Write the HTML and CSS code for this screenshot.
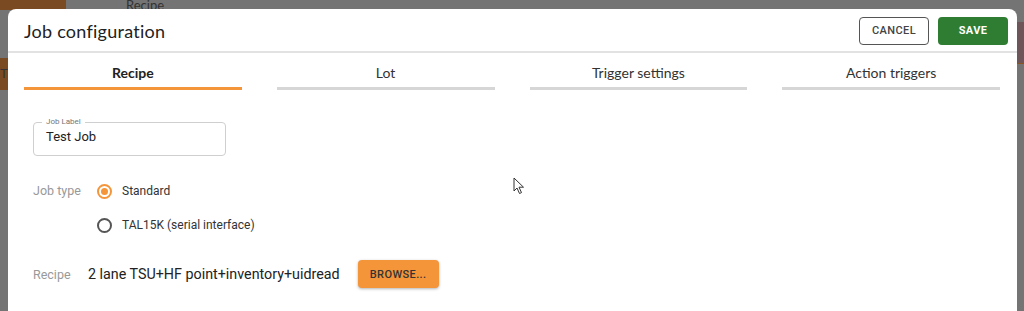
FILE: index.html
```html
<!DOCTYPE html>
<html lang="en">
<head>
    <meta charset="UTF-8">
    <meta name="viewport" content="width=device-width, initial-scale=1.0">
    <title>Job configuration</title>
    <link rel="stylesheet" href="styles.css">
</head>
<body>
    <div class="backdrop">
        <div class="page-bits">
            <div class="bit bit-top"></div>
            <div class="bit-tab">Recipe</div>
            <div class="bit bit-left">T</div>
            <div class="bit bit-right"></div>
        </div>
        <div class="dialog">
            <div class="dialog-header">
                <h1>Job configuration</h1>
                <div class="actions">
                    <button class="btn btn-cancel">CANCEL</button>
                    <button class="btn btn-save">SAVE</button>
                </div>
            </div>
            <div class="tabs">
                <div class="tab active">Recipe</div>
                <div class="tab">Lot</div>
                <div class="tab">Trigger settings</div>
                <div class="tab">Action triggers</div>
            </div>
            <div class="dialog-body">
                <fieldset class="field">
                    <legend>Job Label</legend>
                    <span class="field-value">Test Job</span>
                </fieldset>
                <div class="row radio-row">
                    <span class="row-label">Job type</span>
                    <div class="radios">
                        <label class="radio checked"><span class="dot"></span>Standard</label>
                        <label class="radio"><span class="dot"></span>TAL15K (serial interface)</label>
                    </div>
                </div>
                <div class="row recipe-row">
                    <span class="row-label">Recipe</span>
                    <span class="recipe-name">2 lane TSU+HF point+inventory+uidread</span>
                    <button class="btn btn-browse">BROWSE...</button>
                </div>
            </div>
            <svg class="cursor" width="12" height="18" viewBox="0 0 12 18">
                <path d="M1 1 L1 14 L4 11 L6.5 16.5 L8.5 15.6 L6 10.2 L10.5 10.2 Z" fill="#fff" stroke="#333" stroke-width="1" stroke-linejoin="round"/>
            </svg>
        </div>
    </div>
</body>
</html>
```

FILE: styles.css
```css
* {
    box-sizing: border-box;
}

body {
    margin: 0;
    font-family: Roboto, "Liberation Sans", sans-serif;
}

.backdrop {
    position: relative;
    width: 1024px;
    height: 311px;
    background-color: #747474;
    overflow: hidden;
    padding: 9px 7px 0 8px;
}

/* greyed-out page behind the dialog */
.bit {
    position: absolute;
    background-color: #7a4a22;
}

.bit-top {
    left: 0;
    top: 0;
    width: 66px;
    height: 10px;
}

.bit-tab {
    position: absolute;
    left: 126px;
    top: -3px;
    font-family: Lato, sans-serif;
    font-size: 13px;
    color: #333;
}

.bit-left {
    left: 0;
    top: 58px;
    width: 8px;
    height: 32px;
    color: #333;
    font-size: 13px;
    line-height: 32px;
    overflow: hidden;
}

.bit-right {
    right: 0;
    top: 22px;
    width: 8px;
    height: 42px;
    background-color: #6e5559;
    border-bottom: 1px solid #8a5520;
}

.dialog {
    position: relative;
    height: 100%;
    background-color: #fff;
    border-radius: 8px 8px 0 0;
}

.dialog-header {
    display: flex;
    align-items: center;
    justify-content: space-between;
    height: 44px;
    padding: 1px 9px 0 16px;
    border-bottom: 2px solid #e2e2e2;
}

.dialog-header h1 {
    margin: 0;
    font-family: Lato, sans-serif;
    font-size: 18px;
    font-weight: 400;
    color: #222;
    letter-spacing: 0.25px;
}

.actions {
    display: flex;
    gap: 9px;
}

.btn {
    font-family: Roboto, sans-serif;
    font-size: 11px;
    font-weight: 500;
    letter-spacing: 0.4px;
    height: 28px;
    border-radius: 4px;
    cursor: pointer;
}

.btn-cancel {
    width: 70px;
    background-color: #fff;
    border: 1px solid #555;
    color: #444;
}

.btn-save {
    width: 70px;
    background-color: #2e7d32;
    border: none;
    color: #fff;
    font-weight: 700;
}

.tabs {
    display: flex;
    gap: 35px;
    padding: 0 17px 0 16px;
}

.tab {
    flex: 1;
    height: 37px;
    padding-top: 11px;
    text-align: center;
    font-family: Lato, sans-serif;
    font-size: 14px;
    color: #333;
    border-bottom: 3px solid #d6d6d6;
}

.tab.active {
    font-weight: 700;
    color: #222;
    border-bottom-color: #f5953a;
}

.dialog-body {
    padding: 28px 25px 0;
}

.field {
    width: 193px;
    height: 38px;
    margin: 0;
    padding: 0 12px;
    border: 1px solid #cfcfcf;
    border-radius: 4px;
}

.field legend {
    padding: 0 4px;
    margin-left: -4px;
    font-size: 8px;
    color: #777;
    line-height: 8px;
}

.field-value {
    display: block;
    font-size: 13px;
    color: #222;
    line-height: 16px;
    margin-top: 3px;
}

.row {
    display: flex;
}

.row-label {
    width: 64px;
    font-size: 12.5px;
    color: #999;
}

.radio-row {
    margin-top: 27px;
}

.radios {
    display: flex;
    flex-direction: column;
    gap: 18px;
}

.radio {
    display: flex;
    align-items: center;
    gap: 10px;
    font-size: 12px;
    color: #333;
    line-height: 16px;
}

.dot {
    width: 15px;
    height: 15px;
    border: 2px solid #555;
    border-radius: 50%;
    display: flex;
    align-items: center;
    justify-content: center;
}

.radio.checked .dot {
    border-color: #f5953a;
}

.radio.checked .dot::after {
    content: "";
    width: 7px;
    height: 7px;
    border-radius: 50%;
    background-color: #f5953a;
}

.recipe-row {
    align-items: center;
    margin-top: 27px;
}

.recipe-row .row-label {
    width: 55px;
}

.recipe-name {
    font-size: 14.3px;
    color: #222;
}

.btn-browse {
    margin-left: 18px;
    width: 81px;
    background-color: #f5953a;
    border: none;
    color: #333;
    box-shadow: 0 1px 3px rgba(0, 0, 0, 0.3);
}

.cursor {
    position: absolute;
    left: 505px;
    top: 168px;
}
```
